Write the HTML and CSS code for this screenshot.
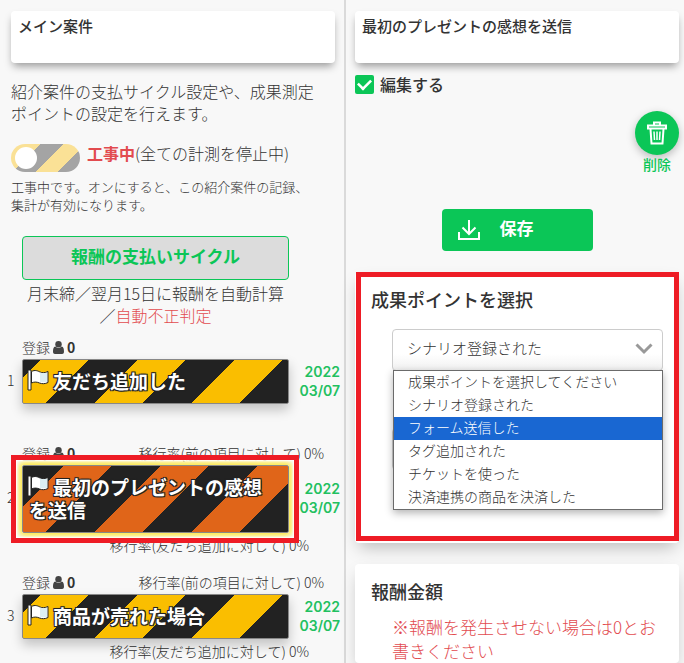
FILE: index.html
```html
<!DOCTYPE html>
<html lang="ja">
<head>
<meta charset="utf-8">
<title>メイン案件</title>
<link rel="stylesheet" href="styles.css">
</head>
<body>
<svg class="sprite" aria-hidden="true">
  <symbol id="flag" viewBox="0 0 22 22">
    <path d="M1 1h3v20H1z" fill="#fff" stroke="#222"/>
    <path d="M4.500 2.500C8 .5 11 2 13 3s5 1 8-.5v11c-3 1.500-6 1.500-8.500.5S7.500 12.500 4.500 14z" fill="#fff" stroke="#222"/>
    <path d="M13 3.500c2 .8 4 .9 7 .2v9c-3 .9-5 .8-7 0z" fill="#dceef2"/>
  </symbol>
  <symbol id="user" viewBox="0 0 12 14">
    <circle cx="6" cy="3.500" r="3.500"/>
    <path d="M2.500 6c2 2 5 2 7 0C11.500 6.500 12 8.500 12 11.500c0 1.500-1 2.500-2 2.500H2c-1 0-2-1-2-2.500C0 8.500.5 6.500 2.500 6z"/>
  </symbol>
</svg>
<main class="page">
  <section class="panel panel-main">
    <h1 class="title-card">メイン案件</h1>
    <p class="lead">紹介案件の支払サイクル設定や、成果測定ポイントの設定を行えます。</p>
    <div class="status">
      <input type="checkbox" role="switch" id="status" class="switch">
      <label for="status"><strong>工事中</strong>(全ての計測を停止中)</label>
    </div>
    <p class="hint">工事中です。オンにすると、この紹介案件の記録、集計が有効になります。</p>
    <div class="cycle">
      <button type="button" class="cycle-button">報酬の支払いサイクル</button>
      <p class="cycle-text">月末締／翌月15日に報酬を自動計算</p>
      <p>／<span class="warn">自動不正判定</span></p>
    </div>
    <ol class="steps">
      <li class="step">
        <div class="meta"><span class="count">登録<svg class="user"><use href="#user"/></svg><b>0</b></span></div>
        <div class="row">
          <span class="number">1</span>
          <button type="button" class="bar"><svg class="flag"><use href="#flag"/></svg>友だち追加した</button>
          <time class="date" datetime="2022-03-07">2022<br>03/07</time>
        </div>
        <div class="total"></div>
      </li>
      <li class="step">
        <div class="meta"><span class="count">登録<svg class="user"><use href="#user"/></svg><b>0</b></span><span>移行率(前の項目に対して) 0%</span></div>
        <div class="row">
          <span class="number">2</span>
          <button type="button" class="bar bar-active"><svg class="flag"><use href="#flag"/></svg>最初のプレゼントの感想を送信</button>
          <time class="date" datetime="2022-03-07">2022<br>03/07</time>
          <span class="marker marker-step"></span>
        </div>
        <div class="total">移行率(友だち追加に対して) 0%</div>
      </li>
      <li class="step">
        <div class="meta"><span class="count">登録<svg class="user"><use href="#user"/></svg><b>0</b></span><span>移行率(前の項目に対して) 0%</span></div>
        <div class="row">
          <span class="number">3</span>
          <button type="button" class="bar"><svg class="flag"><use href="#flag"/></svg>商品が売れた場合</button>
          <time class="date" datetime="2022-03-07">2022<br>03/07</time>
        </div>
        <div class="total">移行率(友だち追加に対して) 0%</div>
      </li>
    </ol>
  </section>

  <section class="panel panel-edit">
    <h2 class="title-card">最初のプレゼントの感想を送信</h2>
    <div class="edit">
      <input type="checkbox" id="edit" class="check" checked>
      <label for="edit">編集する</label>
    </div>
    <button type="button" class="delete">
      <span class="delete-circle">
        <svg viewBox="0 0 20 24" width="20" height="24" fill="none" stroke="#fff" stroke-width="2">
          <path d="M7 4V1.500h6V4M1 4.500h18M1 7.500h18M1 3.500v5M19 3.500v5M3.500 8l1 14.500h11l1-14.500"/>
          <path d="M7 10.500l.5 8.500M10 10.500V19M13 10.500l-.5 8.500" stroke-width="1.500"/>
        </svg>
      </span>
      削除
    </button>
    <button type="button" class="save">
      <svg viewBox="0 0 22 22" width="22" height="22" fill="none" stroke="#fff" stroke-width="2">
        <path d="M11 1v14M4.500 8.500L11 15l6.500-6.500M1 13v7h20v-7"/>
      </svg>
      <span>保存</span>
    </button>
    <section class="box box-point">
      <h3>成果ポイントを選択</h3>
      <div class="picker">
        <select class="field" aria-label="成果ポイントを選択">
          <option>シナリオ登録された</option>
        </select>
        <svg class="chevron" viewBox="0 0 18 12" width="18" height="12" fill="none" stroke="#999" stroke-width="3"><path d="M1.500 1.500L9 9l7.500-7.500"/></svg>
        <ul class="options" role="listbox" aria-label="成果ポイントを選択">
          <li role="option">成果ポイントを選択してください</li>
          <li role="option">シナリオ登録された</li>
          <li role="option" class="selected" aria-selected="true">フォーム送信した</li>
          <li role="option">タグ追加された</li>
          <li role="option">チケットを使った</li>
          <li role="option">決済連携の商品を決済した</li>
        </ul>
      </div>
      <div class="field field-next"></div>
      <span class="marker marker-point"></span>
    </section>
    <section class="box box-reward">
      <h3>報酬金額</h3>
      <p class="note">※報酬を発生させない場合は0とお書きください</p>
    </section>
  </section>
</main>
</body>
</html>
```
FILE: styles.css
```css
* { box-sizing: border-box; }
html { scrollbar-width: none; }
body {
  margin: 0;
  background: #f8f8f8;
  color: #333;
  font-family: "Noto Sans CJK JP", sans-serif;
  font-weight: 300;
  font-size: 16px;
  line-height: 22px;
}
h1, h2, h3, p, ol, ul { margin: 0; padding: 0; list-style: none; }
button, select { font: inherit; color: inherit; margin: 0; }
button { cursor: pointer; border: 0; }
.sprite { position: absolute; width: 0; height: 0; }

.page {
  display: grid;
  grid-template-columns: 346fr 338fr;
  min-height: 100vh;
}
.panel { display: flex; flex-direction: column; min-width: 0; }
.panel-main { border-right: 2px solid #dadada; padding: 11px 0 0; }
.panel-edit { padding: 11px 5px 0 9px; }

.title-card {
  min-height: 52px;
  padding: 4px 7px;
  background: #fff;
  border-radius: 4px;
  box-shadow: 0 5px 8px -2px rgba(0, 0, 0, .4);
  font-size: 15px;
  font-weight: 500;
}
.panel-main .title-card, .lead, .status, .hint { margin-left: 11px; margin-right: 9px; }
.lead { margin-top: 17px; padding-right: 10px; }

.status { display: flex; align-items: center; gap: 7px; margin-top: 20px; height: 28px; }
.status label { padding-bottom: 10px; }
.status strong { font-weight: 700; color: #e24b4f; }
.switch {
  appearance: none;
  position: relative;
  width: 69px;
  height: 28px;
  margin: 0;
  border-radius: 14px;
  background: linear-gradient(-45deg, #a4a4a4 25%, #fae196 25% 50%, #a4a4a4 50% 75%, #fae196 75%) right bottom / 45px 45px;
}
.switch::before {
  content: "";
  position: absolute;
  top: 3px;
  left: 4px;
  width: 22px;
  height: 22px;
  border-radius: 50%;
  background: #fff;
}
.hint { margin-top: 6px; padding-right: 20px; font-size: 13px; line-height: 18px; }

.cycle { width: 267px; margin: 22px 0 0 22px; text-align: center; }
.cycle-button {
  width: 100%;
  height: 44px;
  padding: 0 0 4px;
  border: 1px solid #0bc657;
  border-radius: 4px;
  background: #dcdcdc;
  color: #0bc657;
  font-size: 17px;
  font-weight: 700;
}
.cycle-text { margin-top: 2px; }
.warn { color: #e24b4f; }

.steps { display: grid; gap: 17px; margin-top: 11px; font-size: 14px; line-height: 20px; }
.meta { display: flex; justify-content: space-between; height: 20px; margin-bottom: 2px; padding: 0 20px 0 22px; }
.count { display: flex; align-items: center; gap: 3px; }
.count b { font-weight: 700; }
.user { width: 11px; height: 13px; fill: #444; }
.row { position: relative; display: grid; grid-template-columns: 22px 267px 1fr; align-items: center; }
.number { padding: 0 0 4px 7px; }
.bar {
  min-height: 45px;
  padding: 9px 16px 11px 6px;
  border: 1px solid #888;
  border-radius: 2px;
  background: linear-gradient(-45deg, #222 25%, #fabe00 25% 50%, #222 50% 75%, #fabe00 75%) right bottom / 97px 97px;
  box-shadow: 0 6px 12px rgba(0, 0, 0, .22);
  color: #fff;
  font-size: 19px;
  font-weight: 700;
  line-height: 23px;
  text-align: left;
  text-shadow: 1px 1px #222, -1px -1px #222, 1px -1px #222, -1px 1px #222, 0 0 2px #222;
}
.bar-active {
  background-image: linear-gradient(-45deg, #222 25%, #e06519 25% 50%, #222 50% 75%, #e06519 75%);
  box-shadow: 0 0 6px 3px #ffe83c;
}
.flag { width: 22px; height: 22px; margin: 0 4px 0 -2px; vertical-align: -2px; }
.date { padding: 0 4px 2px 0; text-align: right; color: #22c060; font-family: Inter, sans-serif; font-size: 14px; font-weight: 600; line-height: 19px; }
.total { height: 20px; margin-top: 2px; padding-right: 35px; text-align: right; }

.marker { position: absolute; border: 5px solid #ee1c25; pointer-events: none; }
.marker-step { top: -10px; bottom: -10px; left: 11px; width: 288px; box-shadow: inset 0 0 2px 1px #fff; z-index: 1; }
.marker-point { inset: 0 0 2px 1px; }

.edit { display: flex; align-items: center; gap: 6px; margin-top: 10px; font-weight: 500; }
.check { appearance: none; width: 19px; height: 19px; margin: 0; border-radius: 2px; background: #0bc657; display: grid; place-items: center; }
.check::before {
  content: "";
  width: 12px;
  height: 7px;
  margin-bottom: 3px;
  border: 0 solid #fff;
  border-width: 0 0 3px 3px;
  transform: rotate(-45deg) scale(.85);
}
.delete {
  align-self: flex-end;
  display: grid;
  justify-items: center;
  margin-top: 16px;
  padding: 0;
  background: none;
  color: #0bc657;
  font-size: 14px;
  font-weight: 500;
  line-height: 18px;
}
.delete-circle {
  display: grid;
  place-items: center;
  width: 44px;
  height: 44px;
  border-radius: 50%;
  background: #0bc657;
  box-shadow: 0 3px 8px rgba(0, 0, 0, .25);
}
.save {
  align-self: center;
  display: flex;
  align-items: center;
  gap: 20px;
  width: 151px;
  height: 42px;
  margin-top: 36px;
  padding: 0 16px;
  border-radius: 4px;
  background: #0bc657;
  color: #fff;
  font-size: 17px;
  font-weight: 700;
}
.save span { padding-bottom: 4px; }

.box { position: relative; padding: 15px 16px; border-radius: 4px; background: #fff; box-shadow: 0 8px 16px -4px rgba(0, 0, 0, .25); }
.box h3 { font-size: 18px; font-weight: 500; line-height: 24px; }
.box-point { margin-top: 21px; padding-bottom: 73px; }
.box-reward { flex: 1; margin-top: 21px; padding-bottom: 0; }
.picker { position: relative; margin: 18px 0 0 21px; }
.field {
  appearance: none;
  display: block;
  width: 100%;
  height: 42px;
  padding: 0 14px 4px;
  border: 1px solid #ccc;
  border-radius: 4px;
  background: linear-gradient(#fff 60%, #f1f1f1);
  font-size: 15px;
}
.chevron { position: absolute; top: 14px; right: 10px; pointer-events: none; }
.options {
  position: absolute;
  z-index: 1;
  top: 41px;
  left: 1px;
  right: 0;
  border: 1px solid #6b6b6b;
  background: #fff;
  box-shadow: 0 3px 8px rgba(0, 0, 0, .3);
  font-size: 14px;
  line-height: 21px;
}
.options li { padding: 0 14px 2px; }
.options .selected { background: #1967d2; color: #fff; }
.field-next { width: auto; margin: 57px 0 0 21px; }
.note { margin: 12px 0 0 21px; color: #e24b4f; font-size: 17px; line-height: 24px; }
```
